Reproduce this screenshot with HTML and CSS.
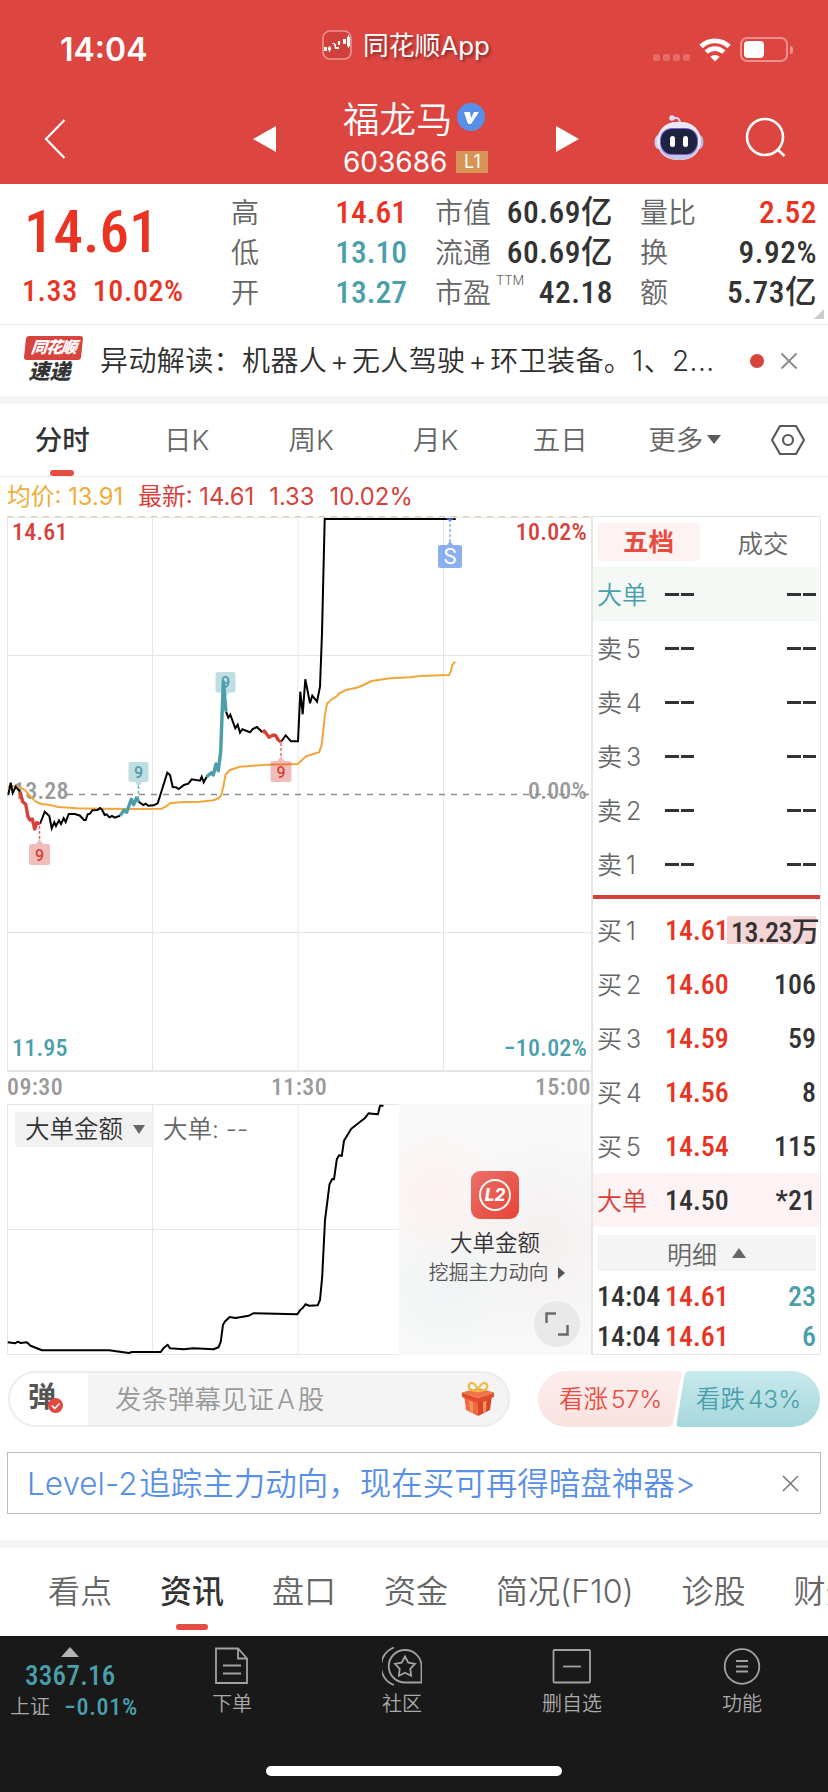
FILE: index.html
```html
<!DOCTYPE html>
<html lang="zh-CN">
<head>
    <meta charset="UTF-8">
    <meta name="viewport" content="width=device-width, initial-scale=1.0">
    <title>福龙马 603686</title>
    <link rel="stylesheet" href="styles.css">
</head>
<body>
    <header class="header">
        <div class="status-bar">
            <span class="clock">14:04</span>
            <div class="app-name">
                <svg width="30" height="30" viewBox="0 0 30 30">
                    <rect x="1" y="1" width="28" height="28" rx="7" fill="#d2403c" stroke="#ec9491" stroke-width="1.6"/>
                    <path d="M2 17h3v4H2zM12 14h2v3h3v2h-4zM18 11h-2v4h2zM21 9h3v5h-3z" fill="#fff"/>
                    <path d="M7.500 16v6M6.500 17.500h2v2.500h-2zM10 13.500h3M26.500 5v13M25.500 7h2v9h-2z" fill="none" stroke="#fff"/>
                </svg>
                <span>同花顺App</span>
            </div>
            <div class="signals">
                <span class="dots"><i></i><i></i><i></i><i></i></span>
                <svg width="32" height="24" viewBox="0 0 32 24">
                    <path d="M2 8.500a20 20 0 0 1 28 0" fill="none" stroke="#fff" stroke-width="4.800"/>
                    <path d="M7.200 14.200a12.500 12.500 0 0 1 17.600 0" fill="none" stroke="#fff" stroke-width="4.600"/>
                    <path d="M11.300 18.800a6.800 6.800 0 0 1 9.400 0L16 23.600z" fill="#fff"/>
                </svg>
                <span class="battery"></span>
            </div>
        </div>
        <div class="nav">
            <svg class="back" width="24" height="42" viewBox="0 0 24 42"><path d="M21.500 2L3 21l18.500 19" fill="none" stroke="#fff" stroke-width="2.200"/></svg>
            <svg class="prev" width="23" height="26" viewBox="0 0 23 26"><path d="M0 13L23 0v26z" fill="#fff"/></svg>
            <div class="stock">
                <div class="stock-name">福龙马
                    <svg width="28" height="28" viewBox="0 0 28 28">
                        <circle cx="14" cy="14" r="14" fill="#588fe8"/>
                        <path d="M7 9h6l1 6 3-6h5l-8 12h-3z" fill="#fff"/>
                    </svg>
                </div>
                <div class="stock-code">603686<span class="level">L1</span></div>
            </div>
            <svg class="next" width="23" height="26" viewBox="0 0 23 26"><path d="M23 13L0 0v26z" fill="#fff"/></svg>
            <svg class="robot" width="50" height="46" viewBox="0 0 50 46">
                <path d="M18 3h4q4 0 4 6" fill="none" stroke="#dcdcf4" stroke-width="2"/>
                <circle cx="18" cy="3" r="2.800" fill="#dcdcf4"/>
                <ellipse cx="4.500" cy="27" rx="4" ry="7" fill="#cfcff0"/>
                <ellipse cx="45.500" cy="27" rx="4" ry="7" fill="#b9b9e6"/>
                <rect x="3" y="7" width="44" height="38" rx="19" fill="#e9e9f8"/>
                <path d="M5 33q6 12 20 12t20-12q-8 7-20 7T5 33z" fill="#c4c4e4"/>
                <rect x="6" y="13" width="38" height="27" rx="12" fill="#7a5fd0"/>
                <rect x="7" y="14" width="36" height="25" rx="11" fill="#1e2440"/>
                <rect x="16" y="21" width="5" height="11" rx="2.500" fill="#fff"/>
                <rect x="29" y="21" width="5" height="11" rx="2.500" fill="#fff"/>
            </svg>
            <svg class="search" width="42" height="42" viewBox="0 0 42 42"><circle cx="20" cy="20" r="18" fill="none" stroke="#fff" stroke-width="2.600"/><path d="M32 32l7.500 7" stroke="#fff" stroke-width="2.800"/></svg>
        </div>
    </header>

    <section class="quote">
        <div class="price">
            <div class="last num">14.61</div>
            <div class="change"><span class="num">1.33</span><span class="num">10.02%</span></div>
        </div>
        <dl class="col col-a">
            <dt>高</dt><dd class="num up">14.61</dd>
            <dt>低</dt><dd class="num down">13.10</dd>
            <dt>开</dt><dd class="num down">13.27</dd>
        </dl>
        <dl class="col col-b">
            <dt>市值</dt><dd class="num">60.69亿</dd>
            <dt>流通</dt><dd class="num">60.69亿</dd>
            <dt>市盈<sup>TTM</sup></dt><dd class="num">42.18</dd>
        </dl>
        <dl class="col col-c">
            <dt>量比</dt><dd class="num up">2.52</dd>
            <dt>换</dt><dd class="num">9.92%</dd>
            <dt>额</dt><dd class="num">5.73亿</dd>
        </dl>
        <i class="corner"></i>
    </section>

    <section class="news">
        <div class="news-logo"><b>同花顺</b><strong>速递</strong></div>
        <div class="news-text">异动解读：机器人<i>+</i>无人驾驶<i>+</i>环卫装备。1、2...</div>
        <i class="news-dot"></i>
        <svg width="18" height="18" viewBox="0 0 18 18"><path d="M1.500 1.500l15 15M16.500 1.500l-15 15" stroke="#8a8a8a" stroke-width="1.800"/></svg>
    </section>

    <nav class="tabs">
        <span class="active">分时</span>
        <span>日K</span>
        <span>周K</span>
        <span>月K</span>
        <span>五日</span>
        <span>更多<svg width="14" height="9" viewBox="0 0 14 9"><path d="M0 0h14L7 9z" fill="#5a5a5a"/></svg></span>
        <svg class="setting" width="36" height="32" viewBox="0 0 36 32"><path d="M10 2h16l8 14-8 14H10L2 16z" fill="none" stroke="#5a5a5a" stroke-width="2.200" stroke-linejoin="round"/><circle cx="18" cy="16" r="5" fill="none" stroke="#5a5a5a" stroke-width="2.200"/></svg>
    </nav>

    <main class="board">
        <div class="charts">
            <div class="legend"><span class="avg">均价: 13.91</span><span>最新: 14.61</span><span>1.33</span><span>10.02%</span></div>
            <div class="chart">
                <svg width="584" height="556" viewBox="7 516 584 556">
                    <g stroke="#e6e6e6" fill="none">
                        <path d="M7.500 517v554M152.500 517v554M298 517v554M443.500 517v554M7 517.500h584M7 655.500h584M7 932.500h584"/>
                        <path d="M7 1071h584" stroke-width="2"/>
                    </g>
                    <path d="M7 516.500h584" stroke="#e3c9a4" stroke-dasharray="6 6"/>
                    <text x="13" y="798.500" class="axis gray">13.28</text>
                    <text x="587" y="798.500" class="axis gray end">0.00%</text>
                    <path d="M67 794.500h524" stroke="#8c8c8c" stroke-width="1.300" stroke-dasharray="6 6"/>
                    <polyline fill="none" stroke="#f2a53b" stroke-width="2" points="8,787 12.700,786 20,787.700 25,790 30,796 35.700,801.700 41.700,804 50,805 58.300,807 76.700,808.300 100,808.700 133,809 161.700,808.700 165.700,806.700 170,803.300 180,802.300 200,801.700 213.300,800.300 218.300,798.300 221,795.700 223.300,786.700 225.700,774.300 230,770 240,766.700 266.700,764.700 297.700,764 306,756.300 313.300,754 319.300,752.300 322,743.300 324.700,716.700 327,703.700 331,700 336.700,696.300 339.300,693.300 346.700,689.700 356.700,687.700 363.300,685 371.700,681 390,678.300 410,677.300 420,676 449,675 450.700,671.700 452.300,665.300 455,661.700"/>
                    <polyline fill="none" stroke="#000" stroke-width="2" points="8.300,795 10.700,782.700 12.700,793 15.700,786.700 20,791.700"/>
                    <polyline fill="none" stroke="#000" stroke-width="2" points="40,824 44.700,811.700 49.300,816 51.700,828.300 54.300,822.300 56,826 59,820.300 61,824 63.700,818.300 65.700,822 68.700,814 75,814 80,815.700 84,820 85.700,820 87.700,814.300 90,813.700 92.300,810.300 97.700,810 100,808 102,809.700 104.700,815 106.700,814.300 109.300,817.300 112,816 114.700,817.700 120,815.700"/>
                    <polyline fill="none" stroke="#000" stroke-width="2" points="138.700,801.700 143.300,805 145.700,803.700 148.300,805.700 153.700,805.300 157.700,803.300 167.300,772.700 170,775 172.700,787 176,787.300 178.700,789 184,785 188.300,783.700 191.700,779.300 200,780.700 201.700,776.700 203.700,782.300 206.700,776.700"/>
                    <polyline fill="none" stroke="#000" stroke-width="2" points="226,711.700 228.300,717.700 230.300,714.700 235.300,728.300 237.700,724.700 240,732.700 242.300,729.300 250,732.300 252.700,729 257,727 262.300,732.300"/>
                    <polyline fill="none" stroke="#000" stroke-width="2" points="281,742 285.700,735.300 291,741.300 298,741.300 300.300,691.700 302.700,714.300 305.300,679.300 310,703.300 312.300,695.700 317,701.700 320,686.700 322,633 324.700,519 455.700,519"/>
                    <g fill="none" stroke="#d8413b" stroke-width="3.400" stroke-linejoin="round">
                        <polyline points="20,791.700 22.700,801.700 25.700,804.300 28,816.700 30,820 32.300,819 34.700,829 36.700,822.700 40,824"/>
                        <polyline points="262.300,732.300 264.300,731 269,737.300 273.300,735 275.700,735.700 278.300,740 281,742"/>
                    </g>
                    <g fill="none" stroke="#4a9fab" stroke-width="3.400" stroke-linejoin="round">
                        <polyline points="120,815.700 124,810.300 126.700,812.300 131.300,799.300 133.700,804.700 136.300,798 138.700,801.700"/>
                        <polyline points="206.700,776.700 211.300,772.700 213.300,775 216,764 218.300,770.700 220.700,751.700 223.300,681.700 226,711.700"/>
                    </g>
                    <g class="mark red">
                        <path class="lead" d="M39.500 826v14M281 743v14"/>
                        <path d="M36 844l3.500-5 3.500 5h5a2 2 0 0 1 2 2v17a2 2 0 0 1-2 2h-17a2 2 0 0 1-2-2v-17a2 2 0 0 1 2-2zM277.500 761l3.500-5 3.500 5h5a2 2 0 0 1 2 2v17a2 2 0 0 1-2 2h-17a2 2 0 0 1-2-2v-17a2 2 0 0 1 2-2z"/>
                        <text x="39.500" y="861">9</text>
                        <text x="281" y="778">9</text>
                    </g>
                    <g class="mark teal">
                        <path class="lead" d="M138.500 786v15"/>
                        <path d="M131 762h15.500a2 2 0 0 1 2 2v16a2 2 0 0 1-2 2H142l-3.500 5-3.500-5h-4.500a2 2 0 0 1-2-2v-16a2 2 0 0 1 2-2zM217.500 672h16a2 2 0 0 1 2 2v16.500a2 2 0 0 1-2 2H229l-3.500 5-3.500-5h-4.500a2 2 0 0 1-2-2V674a2 2 0 0 1 2-2z"/>
                        <text x="138.500" y="778">9</text>
                        <text x="225.500" y="688">9</text>
                    </g>
                    <g class="mark blue">
                        <path class="lead" d="M450 519v24"/>
                        <path d="M445.500 518h9l-4.500 4zM447 545l3-4 3 4h7a2 2 0 0 1 2 2v19a2 2 0 0 1-2 2h-20a2 2 0 0 1-2-2v-19a2 2 0 0 1 2-2z"/>
                        <text x="450" y="564">S</text>
                    </g>
                    <text x="12" y="540" class="axis red">14.61</text>
                    <text x="587" y="540" class="axis red end">10.02%</text>
                    <text x="12" y="1056" class="axis teal">11.95</text>
                    <text x="587" y="1056" class="axis teal end">−10.02%</text>
                </svg>
            </div>
            <div class="times num"><span>09:30</span><span>11:30</span><span>15:00</span></div>
            <div class="flow">
                <svg width="392" height="251" viewBox="7 1104 392 251">
                    <path d="M7.500 1104v250M152.500 1104v250M298 1104v250M7 1104.500h392M7 1229.500h392M7 1354.500h392" stroke="#e6e6e6"/>
                    <polyline fill="none" stroke="#000" stroke-width="2" stroke-linejoin="round" points="7.700,1342.300 15.300,1343.300 17.600,1341.700 20.700,1343 26.800,1342.300 30.600,1345.700 42,1350.300 109,1350.300 129,1353 132,1352 160.700,1352 163.400,1348.300 167.600,1344.700 170,1348.300 183.700,1349.300 193.300,1348.300 213.500,1349.300 218.500,1347.300 220.800,1341.700 223,1324.700 225,1321.500 229.600,1317 235.400,1318 248.800,1315.700 253.300,1313.300 297.400,1314.300 300.400,1309.700 302.700,1308 305.400,1304.300 309.200,1305.700 317.600,1305.300 320,1300 322.200,1276.700 325,1220 329.500,1184.300 332.200,1179 334,1179.300 336.800,1159.300 339,1155.300 341.800,1156 344,1140.700 351.300,1128.700 364.700,1118.300 368.500,1113.300 372,1113.700 378,1114.300 380,1105.700 383.500,1105.700"/>
                </svg>
                <div class="flow-title"><span class="select">大单金额<svg width="12" height="9" viewBox="0 0 12 9"><path d="M0 0h12L6 9z" fill="#666"/></svg></span><span>大单: --</span></div>
                <div class="promo">
                    <svg width="48" height="48" viewBox="0 0 48 48">
                        <defs><linearGradient id="l2" x1="0" y1="0" x2="1" y2="1"><stop offset="0" stop-color="#ea7069"/><stop offset="1" stop-color="#e84436"/></linearGradient></defs>
                        <rect width="48" height="48" rx="9" fill="url(#l2)"/>
                        <circle cx="24" cy="24" r="15" fill="none" stroke="#fff" stroke-width="2"/>
                        <text x="24" y="30" text-anchor="middle" class="l2">L2</text>
                    </svg>
                    <div class="promo-title">大单金额</div>
                    <div class="promo-sub">挖掘主力动向<svg width="7" height="12" viewBox="0 0 7 12"><path d="M0 0l7 6-7 6z" fill="#555"/></svg></div>
                    <span class="expand"><svg width="24" height="24" viewBox="0 0 24 24"><path d="M1.500 11V1.500H11M22.500 13v9.500H13" fill="none" stroke="#6a6a6a" stroke-width="2.500"/></svg></span>
                </div>
            </div>
        </div>

        <aside class="depth">
            <div class="depth-tabs"><b>五档</b><span>成交</span></div>
            <div class="row big-sell"><span>大单</span><i class="dash"></i><i class="dash"></i></div>
            <div class="row"><span>卖 5</span><i class="dash"></i><i class="dash"></i></div>
            <div class="row"><span>卖 4</span><i class="dash"></i><i class="dash"></i></div>
            <div class="row"><span>卖 3</span><i class="dash"></i><i class="dash"></i></div>
            <div class="row"><span>卖 2</span><i class="dash"></i><i class="dash"></i></div>
            <div class="row"><span>卖 1</span><i class="dash"></i><i class="dash"></i></div>
            <div class="split"></div>
            <div class="row"><span>买 1</span><em class="num up">14.61</em><em class="num bar">13.23万</em></div>
            <div class="row"><span>买 2</span><em class="num up">14.60</em><em class="num">106</em></div>
            <div class="row"><span>买 3</span><em class="num up">14.59</em><em class="num">59</em></div>
            <div class="row"><span>买 4</span><em class="num up">14.56</em><em class="num">8</em></div>
            <div class="row"><span>买 5</span><em class="num up">14.54</em><em class="num">115</em></div>
            <div class="row big-buy"><span>大单</span><em class="num">14.50</em><em class="num">*21</em></div>
            <div class="detail">明细<svg width="14" height="10" viewBox="0 0 14 10"><path d="M0 10h14L7 0z" fill="#666"/></svg></div>
            <div class="row tick"><em class="num">14:04</em><em class="num up">14.61</em><em class="num down">23</em></div>
            <div class="row tick"><em class="num">14:04</em><em class="num up">14.61</em><em class="num down">6</em></div>
        </aside>
    </main>

    <section class="social">
        <div class="danmu">
            <span class="danmu-switch">弹<svg width="15" height="15" viewBox="0 0 15 15"><circle cx="7.500" cy="7.500" r="7.500" fill="#e2483d"/><path d="M3.800 7.500l3 3 4.700-5" fill="none" stroke="#fff" stroke-width="1.700"/></svg></span>
            <span class="danmu-input">发条弹幕见证<i>A</i>股</span>
            <svg class="gift" width="34" height="36" viewBox="0 0 34 36">
                <path d="M3 14l14 7v14L5 29z" fill="#ef6a40"/>
                <path d="M31 14l-14 7v14l12-6z" fill="#d8432c"/>
                <path d="M1 11.500L17 17l16-5.500v4.500l-16 6L1 16z" fill="#e24b2e"/>
                <path d="M1 11.500L17 7l16 4.500L17 17z" fill="#f07348"/>
                <path d="M8 19.500l4 1.500v11l-3-1.500zM25.500 19.500L22 21v11l3-1.500z" fill="#f3935c"/>
                <path d="M17 10C11 10 6.500 8 8 4s6.500-2 9 5c2.500-7 7.500-9 9-5s-3 6-9 6z" fill="none" stroke="#eebc4a" stroke-width="2.200"/>
            </svg>
        </div>
        <div class="vote">
            <svg width="282" height="56" viewBox="0 0 282 56">
                <defs>
                    <linearGradient id="rise" x1="0" y1="0" x2="0" y2="1"><stop offset="0" stop-color="#fceeed"/><stop offset="1" stop-color="#f9e2e0"/></linearGradient>
                    <linearGradient id="fall" x1="0" y1="0" x2="0" y2="1"><stop offset="0" stop-color="#c8e9ec"/><stop offset="1" stop-color="#a6d8dd"/></linearGradient>
                </defs>
                <path d="M28 0h112q4 0 3.300 4l-8 47q-1 5-6 5H28a28 28 0 0 1 0-56z" fill="url(#rise)"/>
                <path d="M152 0h102a28 28 0 0 1 0 56H142q-4 0-3.300-4l7.600-47q1-5 5.700-5z" fill="url(#fall)"/>
            </svg>
            <span class="rise">看涨 57%</span>
            <span class="fall">看跌 43%</span>
        </div>
    </section>

    <section class="banner">
        <span>Level-2 追踪主力动向，现在买可再得暗盘神器&gt;</span>
        <svg width="17" height="17" viewBox="0 0 17 17"><path d="M1 1l15 15M16 1L1 16" stroke="#777" stroke-width="1.500"/></svg>
    </section>

    <nav class="sections">
        <span>看点</span>
        <span class="active">资讯</span>
        <span>盘口</span>
        <span>资金</span>
        <span>简况(F10)</span>
        <span>诊股</span>
        <span>财务</span>
    </nav>

    <footer class="footer">
        <div class="index">
            <svg width="18" height="10" viewBox="0 0 18 10"><path d="M0 10L9 0l9 10z" fill="#b4b4b4"/></svg>
            <div class="index-value num">3367.16</div>
            <div class="index-change">上证<span class="num">−0.01%</span></div>
        </div>
        <div class="tool">
            <svg width="40" height="40" viewBox="0 0 40 40"><path d="M4 2.500h22l9 10V37H4zM26 2.500v10h9M11 19.500h18M11 27.500h18"/></svg>
            <span>下单</span>
        </div>
        <div class="tool">
            <svg width="40" height="40" viewBox="0 0 40 40"><path d="M12 1.500A20 20 0 0 0 12 39M23 4a16 16 0 0 0 0 32.500h16.500V20A16.300 16.300 0 0 0 23 4zM23 10.500l3.300 6.200 6.700 1.200-4.700 5 .8 6.800-6.100-3-6.100 3 .8-6.800-4.700-5 6.700-1.200z"/></svg>
            <span>社区</span>
        </div>
        <div class="tool">
            <svg width="40" height="40" viewBox="0 0 40 40"><rect x="1.500" y="4" width="36.500" height="32.500" rx="1"/><path d="M11 20.500h18"/></svg>
            <span>删自选</span>
        </div>
        <div class="tool">
            <svg width="40" height="40" viewBox="0 0 40 40"><circle cx="20" cy="20.500" r="17.300"/><path d="M14 15h12M14 20.500h12M14 25.500h12"/></svg>
            <span>功能</span>
        </div>
        <i class="home-bar"></i>
    </footer>
</body>
</html>
```
FILE: styles.css
```css
* {
    box-sizing: border-box;
}

body {
    width: 828px;
    height: 1792px;
    margin: 0;
    overflow: hidden;
    background: #fff;
    color: #333;
    font-family: Inter, "Noto Sans CJK SC", sans-serif;
    font-weight: 350;
    font-size: 28px;
}

svg {
    display: block;
    flex: none;
}

i, em {
    font-style: normal;
}

.num {
    font-family: Roboto, "Noto Sans CJK SC", sans-serif;
    font-weight: 500;
    font-stretch: 85%;
}

.up { color: #ea3323 !important; }
.down { color: #4a9fab !important; }

/* header */
.header {
    height: 184px;
    background: #dd4540;
    color: #fff;
}

.status-bar {
    display: flex;
    height: 92px;
    padding: 0 34px 0 60px;
}

.clock {
    width: 262px;
    line-height: 99px;
    font-size: 32px;
    font-weight: 600;
}

.app-name {
    display: flex;
    align-items: center;
    gap: 11px;
    width: 331px;
    height: 90px;
    font-size: 25.800px;
    font-weight: 400;
    text-shadow: 2px 2px 3px rgba(0, 0, 0, .4);
}

.app-name span { margin-top: -4px; }

.signals {
    display: flex;
    align-items: center;
    height: 99px;
}

.dots {
    display: flex;
    gap: 3px;
    margin: 16px 9px 0 0;
}

.dots i {
    width: 7px;
    height: 7px;
    border-radius: 2px;
    background: #e66b67;
}

.battery {
    position: relative;
    width: 48px;
    height: 25px;
    margin-left: 9px;
    border: 2px solid #eb908d;
    border-radius: 7px;
}

.battery::before {
    content: "";
    display: block;
    width: 20px;
    height: 17px;
    margin: 2px;
    border-radius: 4px;
    background: #fff;
}

.battery::after {
    content: "";
    position: absolute;
    right: -7px;
    top: 7px;
    width: 3px;
    height: 8px;
    border-radius: 0 3px 3px 0;
    background: #eb908d;
}

.nav {
    display: flex;
    height: 92px;
}

.back { margin: 26px 0 0 43px; }
.prev { margin: 34px 0 0 186px; }

.stock {
    width: 146px;
    margin-left: 67px;
}

.stock-name {
    display: flex;
    align-items: center;
    height: 50px;
    gap: 4px;
    font-size: 36.500px;
    font-weight: 350;
    white-space: nowrap;
}

.stock-code {
    display: flex;
    align-items: center;
    height: 39px;
    font-size: 28px;
    font-weight: 400;
}

.level {
    width: 32px;
    height: 22px;
    margin-left: 9px;
    background: #d79455;
    font-size: 18px;
    line-height: 22px;
    text-align: center;
}

.next { margin: 34px 0 0 67px; }
.robot { margin: 23px 0 0 75px; }
.search { margin: 25px 0 0 41px; }

/* quote */
.quote {
    position: relative;
    display: flex;
    height: 141px;
    border-bottom: 1px solid #e8e8e8;
}

.price {
    width: 231px;
    padding-left: 22px;
    color: #ea3323;
}

.last {
    height: 88px;
    padding-left: 2px;
    line-height: 96px;
    font-size: 59px;
}

.change {
    display: flex;
    gap: 15px;
    font-size: 30px;
    line-height: 37px;
    letter-spacing: .6px;
}

.col {
    display: grid;
    grid-template-columns: 56px 1fr;
    grid-auto-rows: 40px;
    margin: 9px 0 0;
    line-height: 40px;
}

.col dt {
    color: #666;
    white-space: nowrap;
}

.col dd {
    margin: 0;
    font-size: 31.500px;
    text-align: right;
    white-space: nowrap;
}

.col sup {
    font-size: 13px;
    line-height: 0;
    vertical-align: 18px;
    margin-left: 5px;
}

.col-a { width: 176px; }
.col-b { width: 178px; margin-left: 28px; }
.col-c { width: 177px; margin-left: 27px; }

.col-b dd,
.col-c dd {
    letter-spacing: .5px;
}

.corner {
    position: absolute;
    right: 4px;
    bottom: 5px;
    border-left: 10px solid transparent;
    border-bottom: 10px solid #ccc;
}

/* news */
.news {
    display: flex;
    align-items: center;
    height: 79px;
    border-bottom: 8px solid #f4f4f4;
}

.news-logo {
    width: 57px;
    margin-left: 25px;
    text-align: center;
    font-weight: 900;
    font-size: 16px;
    font-style: italic;
}

.news-logo b {
    display: block;
    height: 24px;
    border-radius: 3px;
    background: #d8433e;
    color: #fff;
    line-height: 23px;
    letter-spacing: -1px;
    transform: skewX(-6deg);
}

.news-logo strong {
    display: block;
    height: 25px;
    padding-right: 8px;
    line-height: 24px;
    font-size: 21px;
}

.news-text {
    width: 632px;
    margin: -4px 0 0 18px;
    color: #2e2e2e;
    font-size: 28px;
    letter-spacing: .4px;
    white-space: nowrap;
}

.news-text i { margin: 0 3px; }

.news-dot {
    width: 14px;
    height: 14px;
    margin: 0 16px 0 18px;
    border-radius: 50%;
    background: #d8433e;
}

/* chart tabs */
.tabs {
    display: flex;
    height: 73px;
    border-bottom: 1px solid #ececec;
    color: #666;
    line-height: 73px;
}

.tabs span {
    width: 124.500px;
    text-align: center;
    font-size: 27.500px;
}

.tabs .active,
.sections .active {
    position: relative;
    color: #333;
    font-weight: 500;
}

.active::after {
    content: "";
    position: absolute;
    left: 50%;
    bottom: 0;
    width: 24px;
    height: 6px;
    margin-left: -12px;
    border-radius: 3px;
    background: #e84b3f;
}

.tabs span svg {
    display: inline-block;
    margin-left: 4px;
    vertical-align: 6px;
}

.setting { margin: 20px 0 0 23px; }

/* board */
.board {
    display: flex;
    height: 878px;
    padding-left: 7px;
}

.charts { width: 584px; }

.legend {
    display: flex;
    gap: 15px;
    height: 39px;
    line-height: 39px;
    color: #d8413b;
    font-size: 23.800px;
    font-weight: 400;
    white-space: nowrap;
}

.legend .avg { color: #f0ad3c; }
.chart { height: 556px; }

.axis {
    font-family: Roboto, sans-serif;
    font-weight: 500;
    font-size: 24px;
    font-stretch: 85%;
    letter-spacing: .2px;
}

.end { text-anchor: end; }
.axis.gray { fill: #999; }
.axis.red { fill: #d8413b; }
.axis.teal { fill: #4a9fab; }

.mark path { opacity: .35; }

.mark .lead {
    fill: none;
    opacity: .8;
    stroke-width: 1.500;
    stroke-dasharray: 3 2;
}

.mark text {
    font-family: Roboto, sans-serif;
    font-size: 16px;
    font-weight: 500;
    text-anchor: middle;
}

.mark.red { fill: #d8413b; }
.mark.red .lead { stroke: #d8413b; }
.mark.teal { fill: #4a9fab; }
.mark.teal .lead { stroke: #4a9fab; }
.mark.blue { fill: #588fe8; }
.mark.blue path { opacity: .7; }
.mark.blue .lead { stroke: #588fe8; }

.mark.blue text {
    fill: #fff;
    font-size: 22px;
    font-weight: 400;
}

.times {
    display: flex;
    justify-content: space-between;
    height: 32px;
    color: #999;
    font-size: 24px;
    line-height: 31px;
    letter-spacing: .4px;
}

.flow {
    position: relative;
    display: flex;
    height: 251px;
}

.flow-title {
    position: absolute;
    left: 8px;
    top: 8px;
    display: flex;
    gap: 9px;
    color: #666;
    font-size: 24.500px;
    line-height: 35px;
}

.select {
    display: flex;
    align-items: center;
    gap: 10px;
    width: 139px;
    height: 35px;
    padding-left: 10px;
    border-radius: 3px;
    background: rgba(240, 240, 240, .9);
    color: #333;
}

.promo {
    position: relative;
    display: flex;
    flex-direction: column;
    align-items: center;
    width: 192px;
    padding-top: 67px;
    background: radial-gradient(circle at 20% 36%, #fcf1f1, transparent 35%), radial-gradient(circle at 25% 72%, #f0f4f4, transparent 35%), radial-gradient(circle at 75% 55%, #f3efef, transparent 55%), #f9f9f9;
}

.l2 {
    font-size: 17px;
    font-style: italic;
    font-weight: 800;
    fill: #fff;
}

.promo-title {
    margin-top: 6px;
    font-size: 22.500px;
    line-height: 36px;
}

.promo-sub {
    display: flex;
    align-items: center;
    gap: 9px;
    margin-right: -3px;
    color: #555;
    font-size: 20px;
    line-height: 24px;
    white-space: nowrap;
}

.expand {
    position: absolute;
    right: 11px;
    bottom: 8px;
    padding: 11px;
    border-radius: 50%;
    background: #e9e9e9;
}

/* order book */
.depth {
    width: 230px;
    height: 839px;
    margin-top: 39px;
    border: 1px solid #e6e6e6;
    border-left-width: 2px;
}

.depth-tabs {
    display: flex;
    align-items: center;
    height: 50px;
    padding: 0 0 0 4px;
    color: #666;
    font-size: 25.500px;
    text-align: center;
}

.depth-tabs b {
    flex: none;
    width: 103px;
    height: 38px;
    border-radius: 4px;
    background: #fdf3f3;
    color: #e84b3f;
    font-weight: 700;
    line-height: 37px;
}

.depth-tabs span {
    flex: none;
    width: 126px;
    margin-top: -2px;
}

.row {
    display: grid;
    grid-template-columns: 68px 62px 1fr;
    align-items: center;
    height: 54px;
    padding: 0 4px;
    color: #666;
    font-size: 25px;
    white-space: nowrap;
    word-spacing: -3px;
}

.row > span { margin-top: -3px; }

.row .num {
    color: #333;
    font-size: 28px;
}

.row > :last-child {
    justify-self: end;
}

.dash {
    display: flex;
    gap: 2px;
    width: 29px;
}

.dash::before,
.dash::after {
    content: "";
    width: 14px;
    height: 3px;
    background: #333;
}

.big-sell {
    background: #f4f9f6;
    color: #4a9fab;
}

.big-buy {
    background: #fdf3f4;
    color: #d8413b;
}

.split {
    height: 4px;
    margin: 4px 0;
    background: #d8413b;
}

.row .bar {
    padding-left: 4px;
    background: linear-gradient(#f4d5d6, #f4d5d6) 0 50% / calc(100% - 3px) 28px no-repeat;
    letter-spacing: -.6px;
}

.detail {
    display: flex;
    align-items: center;
    justify-content: center;
    gap: 15px;
    height: 36px;
    margin: 8px 4px 5px;
    background: #f4f4f4;
    color: #666;
    font-size: 25px;
}

.tick { height: 40px; }

/* danmu and vote */
.social {
    display: flex;
    justify-content: space-between;
    height: 72px;
    margin-top: 16px;
    padding: 0 8px;
}

.danmu {
    display: flex;
    align-items: center;
    width: 502px;
    height: 56px;
    padding-right: 13px;
    overflow: hidden;
    border: 2px solid #ececec;
    border-radius: 28px;
    background: #f4f4f4;
}

.danmu-switch {
    display: flex;
    align-items: flex-end;
    width: 78px;
    height: 52px;
    padding: 0 0 11px 18px;
    background: #fff;
    color: #555;
    font-size: 28px;
    font-weight: 700;
    line-height: 34px;
}

.danmu-switch svg { margin: 0 0 1px -8px; }

.danmu-input {
    flex: 1;
    margin-top: -4px;
    padding-left: 27px;
    color: #999;
    font-size: 26.500px;
}

.danmu-input i { margin: 0 3px; }

.vote {
    position: relative;
    width: 282px;
    font-size: 24.500px;
    word-spacing: -4px;
}

.vote span {
    position: absolute;
    top: 10px;
    line-height: 36px;
    white-space: nowrap;
}

.rise { left: 21px; color: #e84b3f; }
.fall { left: 158px; color: #4a9fab; }

.banner {
    display: flex;
    align-items: center;
    justify-content: space-between;
    height: 62px;
    margin: 9px 7px 26px;
    padding: 0 21px 0 19px;
    border: 1px solid #bbb;
    color: #588fe8;
    font-size: 31.500px;
    white-space: nowrap;
    word-spacing: -7px;
}

.banner span { margin-top: -4px; }

/* info tabs */
.sections {
    display: flex;
    gap: 48px;
    height: 96px;
    padding-left: 48px;
    border-top: 8px solid #f4f4f4;
    overflow: hidden;
    color: #666;
    font-size: 32px;
    line-height: 88px;
    white-space: nowrap;
}

.sections .active::after {
    width: 32px;
    height: 6px;
    margin-left: -16px;
    bottom: 6px;
}

/* bottom bar */
.footer {
    position: relative;
    display: flex;
    height: 156px;
    background: #191919;
    color: #aaa;
}

.index {
    width: 147px;
    padding: 11px 0 0 10px;
}

.index svg { margin-left: 51px; }

.index-value {
    margin: 3px 0 0 15px;
    color: #4a9fab;
    font-size: 27px;
    line-height: 33px;
    letter-spacing: .3px;
}

.index-change {
    display: flex;
    gap: 14px;
    font-size: 20px;
    line-height: 28px;
    white-space: nowrap;
}

.index-change .num {
    color: #4a9fab;
    font-size: 24px;
    letter-spacing: .7px;
}

.tool {
    flex: 0 0 170px;
    padding-top: 10px;
    text-align: center;
    font-size: 20px;
    line-height: 37px;
}

.tool svg {
    margin: 0 auto;
    fill: none;
    stroke: #a2a2a2;
    stroke-width: 1.800;
}

.home-bar {
    position: absolute;
    left: 266px;
    bottom: 16px;
    width: 296px;
    height: 10px;
    border-radius: 5px;
    background: #fff;
}
```
